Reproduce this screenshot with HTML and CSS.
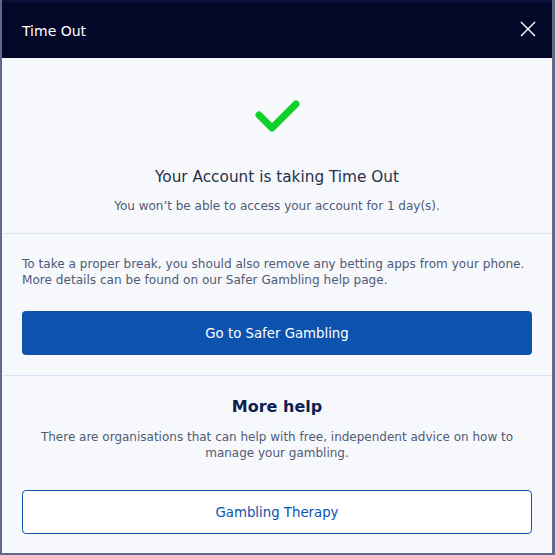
FILE: index.html
```html
<!DOCTYPE html>
<html lang="en">
<head>
<meta charset="utf-8">
<title>Time Out</title>
<link rel="stylesheet" href="styles.css">
</head>
<body>
<div class="modal">
  <header class="modal-header">
    <h1 class="modal-title">Time Out</h1>
    <button class="close" aria-label="Close">
      <svg width="16" height="16" viewBox="0 0 16 16"><path d="M1 1L15 15M15 1L1 15" stroke="#fff" stroke-width="1.4" fill="none"/></svg>
    </button>
  </header>
  <section class="confirm">
    <svg class="check" width="50" height="40" viewBox="0 0 50 40"><path d="M6 17L19 30L43 6" stroke="#10d12c" stroke-width="7" stroke-linecap="round" stroke-linejoin="round" fill="none"/></svg>
    <h2 class="confirm-title">Your Account is taking Time Out</h2>
    <p class="confirm-sub">You won’t be able to access your account for 1 day(s).</p>
  </section>
  <section class="advice">
    <p class="advice-text">To take a proper break, you should also remove any betting apps from your phone. More details can be found on our Safer Gambling help page.</p>
    <button class="btn btn-primary">Go to Safer Gambling</button>
  </section>
  <section class="help">
    <h2 class="help-title">More help</h2>
    <p class="help-text">There are organisations that can help with free, independent advice on how to manage your gambling.</p>
    <button class="btn btn-outline">Gambling Therapy</button>
  </section>
</div>
</body>
</html>
```
FILE: styles.css
```css
html, body {
  margin: 0;
  padding: 0;
}
body {
  width: 555px;
  height: 555px;
  background: #5f6b8a;
  font-family: "DejaVu Sans", Verdana, sans-serif;
  overflow: hidden;
}
.modal {
  margin: 0 3px 0 2px;
  height: 553px;
  background: #f6f8fb;
  display: flex;
  flex-direction: column;
}
.modal-header {
  height: 58px;
  background: #040828;
  border-top: 2px solid #06123a;
  box-sizing: border-box;
  display: flex;
  align-items: center;
  justify-content: space-between;
  padding: 0 16px 0 20px;
}
.modal-title {
  margin: 0;
  font-size: 14px;
  font-weight: normal;
  color: #fff;
  padding-top: 2px;
}
.close {
  background: none;
  border: 0;
  padding: 0;
  width: 16px;
  height: 16px;
  display: flex;
  margin-bottom: 2px;
}
.confirm {
  display: flex;
  flex-direction: column;
  align-items: center;
  padding: 40px 20px 0;
  height: 176px;
  box-sizing: border-box;
  border-bottom: 1px solid #dbe4f6;
}
.check {
  display: block;
  margin-left: 2px;
}
.confirm-title {
  margin: 29px 0 0;
  font-size: 15.3px;
  font-weight: normal;
  color: #27304a;
  line-height: 20px;
}
.confirm-sub {
  margin: 11px 0 0;
  font-size: 12px;
  color: #505b78;
  line-height: 16px;
}
.advice {
  padding: 22px 20px 0;
  height: 142px;
  box-sizing: border-box;
  border-bottom: 1px solid #dbe4f6;
}
.advice-text {
  margin: 0;
  font-size: 12.1px;
  line-height: 16px;
  color: #505b78;
}
.btn {
  display: flex;
  align-items: center;
  justify-content: center;
  width: 100%;
  height: 44px;
  border-radius: 4px;
  font-family: inherit;
  font-size: 13.3px;
  box-sizing: border-box;
}
.btn-primary {
  margin-top: 23px;
  background: #0c52ae;
  color: #fff;
  border: 0;
}
.help {
  padding: 21px 20px 0;
  display: flex;
  flex-direction: column;
  align-items: center;
}
.help-title {
  margin: 0;
  font-size: 16px;
  font-weight: bold;
  color: #0d2050;
  line-height: 20px;
}
.help-text {
  margin: 12px 0 0;
  font-size: 12px;
  line-height: 16px;
  color: #505b78;
  text-align: center;
  padding: 0 10px;
}
.btn-outline {
  margin-top: 29px;
  background: #fff;
  color: #0c52ae;
  border: 1.5px solid #0c52ae;
  height: 44px;
}
```
